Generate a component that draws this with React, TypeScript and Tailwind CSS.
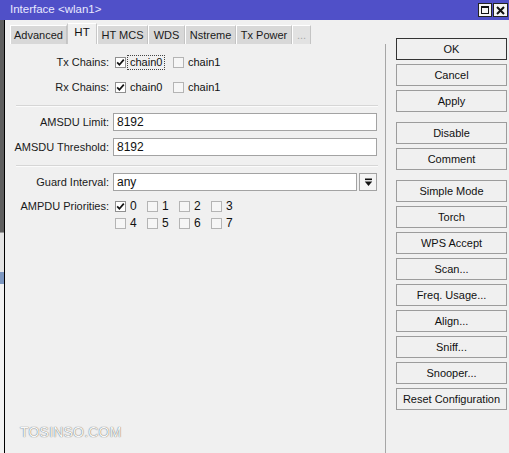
import React from 'react'

const tabs = [
  { label: 'Advanced', w: 'w-[57px]' },
  { label: 'HT', w: 'w-[30px]', active: true },
  { label: 'HT MCS', w: 'w-[51px]' },
  { label: 'WDS', w: 'w-[37px]' },
  { label: 'Nstreme', w: 'w-[51px]' },
  { label: 'Tx Power', w: 'w-[56px]' },
  { label: '...', w: 'w-[19px]', faded: true },
]

const buttonGroups = [
  ['OK', 'Cancel', 'Apply'],
  ['Disable', 'Comment'],
  ['Simple Mode', 'Torch', 'WPS Accept', 'Scan...', 'Freq. Usage...', 'Align...', 'Sniff...', 'Snooper...', 'Reset Configuration'],
]

function Check({ checked }: { checked?: boolean }) {
  return (
    <span
      className={`w-[11px] h-[11px] shrink-0 border flex items-center justify-center ${
        checked ? 'bg-white border-[#8f8f8f]' : 'bg-[#f6f6f6] border-[#b4b4b4]'
      }`}
    >
      {checked && (
        <svg width="9" height="9" viewBox="0 0 9 9">
          <path d="M1.2 4.4 L3.4 6.8 L7.8 1.6" fill="none" stroke="#111" strokeWidth="1.7" />
        </svg>
      )}
    </span>
  )
}

function Label({ text }: { text: string }) {
  return <span className="w-[104px] shrink-0 text-right text-[#1a1a1a]">{text}</span>
}

function Separator() {
  return <div className="ml-[11px] mr-[7px] h-[2px] border-t border-[#d6d6d6] border-b border-b-[#fbfbfb]" />
}

export default function App() {
  return (
    <div className="w-[509px] h-[453px] overflow-hidden flex flex-col bg-[#f0f0f0] font-['Liberation_Sans',Arial,sans-serif] text-[11px] text-[#111]">
      {/* title bar */}
      <div className="h-[20px] shrink-0 bg-[#5050c8] flex items-center justify-between pl-[10px] pr-[1px]">
        <span className="text-[#e8e8ff] text-[11.5px]">Interface &lt;wlan1&gt;</span>
        <div className="flex gap-[1px]">
          <span className="w-[14px] h-[14px] bg-[#f4f4f4] border border-[#222] flex items-center justify-center">
            <span className="w-[8px] h-[8px] border border-[#111] border-t-2" />
          </span>
          <span className="w-[15px] h-[14px] bg-[#f4f4f4] border border-[#222] flex items-center justify-center">
            <svg width="9" height="9" viewBox="0 0 9 9">
              <path d="M1 1 L8 8 M8 1 L1 8" stroke="#111" strokeWidth="2" />
            </svg>
          </span>
        </div>
      </div>

      <div className="flex-1 flex min-h-0">
        {/* background window edge */}
        <div className="w-[5px] shrink-0 flex flex-col border-r border-black">
          <div className="h-[212px] bg-[#5e5e5e]" />
          <div className="h-[40px] bg-[#e4e4e4] border-t border-[#9a9a9a]" />
          <div className="h-[12px] bg-[#7d97c0]" />
          <div className="flex-1 bg-[#f2f2f2]" />
        </div>

        {/* tabs + panel */}
        <div className="w-[381px] shrink-0 flex flex-col pt-[3px]">
          <div className="h-[21px] flex items-end pl-[5px]">
            {tabs.map((t) =>
              t.active ? (
                <div
                  key={t.label}
                  className={`${t.w} h-[21px] bg-[#f0f0f0] border-x border-t border-x-[#c8c8c8] border-t-white flex items-center justify-center pb-[3px] text-[11.5px]`}
                >
                  {t.label}
                </div>
              ) : (
                <div
                  key={t.label}
                  className={`${t.w} h-[19px] border-l border-t border-white border-r border-r-[#c4c4c4] flex items-center justify-center text-[11px] ${
                    t.faded ? 'bg-[#e2e2e2] text-[#a8a8a8]' : 'bg-[#d8d8d8] text-[#1a1a1a]'
                  }`}
                >
                  {t.label}
                </div>
              )
            )}
          </div>

          <div className="flex-1 flex flex-col border-r border-[#a6a6a6]">
            {/* Tx Chains */}
            <div className="mt-[9px] h-[18px] flex items-center">
              <Label text="Tx Chains:" />
              <div className="ml-[6px] flex items-center">
                <div className="w-[58px] flex items-center">
                  <Check checked />
                  <span className="ml-[1px] px-[2px] border border-dotted border-[#444] leading-[13px]">chain0</span>
                </div>
                <Check />
                <span className="ml-[4px]">chain1</span>
              </div>
            </div>

            {/* Rx Chains */}
            <div className="mt-[7px] h-[18px] flex items-center">
              <Label text="Rx Chains:" />
              <div className="ml-[6px] flex items-center">
                <div className="w-[58px] flex items-center">
                  <Check checked />
                  <span className="ml-[4px]">chain0</span>
                </div>
                <Check />
                <span className="ml-[4px]">chain1</span>
              </div>
            </div>

            <div className="mt-[9px]">
              <Separator />
            </div>

            <div className="mt-[6px] h-[18px] flex items-center">
              <Label text="AMSDU Limit:" />
              <div className="ml-[4px] w-[264px] h-[18px] bg-white border border-[#a3a3a3] flex items-center pl-[3px] text-[12px]">
                8192
              </div>
            </div>

            <div className="mt-[7px] h-[18px] flex items-center">
              <Label text="AMSDU Threshold:" />
              <div className="ml-[4px] w-[264px] h-[18px] bg-white border border-[#a3a3a3] flex items-center pl-[3px] text-[12px]">
                8192
              </div>
            </div>

            <div className="mt-[9px]">
              <Separator />
            </div>

            <div className="mt-[6px] h-[18px] flex items-center">
              <Label text="Guard Interval:" />
              <div className="ml-[4px] w-[244px] h-[18px] bg-white border border-[#a3a3a3] flex items-center pl-[3px] text-[12px]">
                any
              </div>
              <div className="ml-[2px] w-[18px] h-[18px] bg-[#f4f4f4] border border-[#a3a3a3] flex items-center justify-center">
                <svg width="9" height="9" viewBox="0 0 9 9">
                  <rect x="1" y="0.5" width="7" height="1.6" fill="#111" />
                  <path d="M0.8 3.4 H8.2 L4.5 8 Z" fill="#111" />
                </svg>
              </div>
            </div>

            {/* AMPDU priorities */}
            <div className="mt-[7px] flex">
              <div className="h-[16px] flex items-center">
                <Label text="AMPDU Priorities:" />
              </div>
              <div className="ml-[6px] flex flex-col gap-[1px]">
                {[
                  [0, 1, 2, 3],
                  [4, 5, 6, 7],
                ].map((row, ri) => (
                  <div key={ri} className="h-[16px] flex items-center">
                    {row.map((n) => (
                      <div key={n} className="w-[32px] flex items-center">
                        <Check checked={n === 0} />
                        <span className="ml-[4px] text-[12px]">{n}</span>
                      </div>
                    ))}
                  </div>
                ))}
              </div>
            </div>

            <div className="mt-auto mb-[10px] pl-[15px] text-[14px] tracking-[0.2px] text-[#f8f8f8] [text-shadow:0_0_1px_#333]">
              TOSINSO.COM
            </div>
          </div>
        </div>

        {/* button column */}
        <div className="flex-1 flex flex-col pt-[18px] pl-[10px] pr-[2px]">
          {buttonGroups.map((group, gi) => (
            <div key={gi} className={`flex flex-col gap-[4px] ${gi > 0 ? 'mt-[10px]' : ''}`}>
              {group.map((b) => (
                <div
                  key={b}
                  className={`h-[22px] flex items-center justify-center bg-[#f0f0f0] border text-[11px] text-[#111] ${
                    b === 'OK' ? 'border-[#333]' : 'border-[#9c9c9c]'
                  }`}
                >
                  {b}
                </div>
              ))}
            </div>
          ))}
        </div>
      </div>
    </div>
  )
}
